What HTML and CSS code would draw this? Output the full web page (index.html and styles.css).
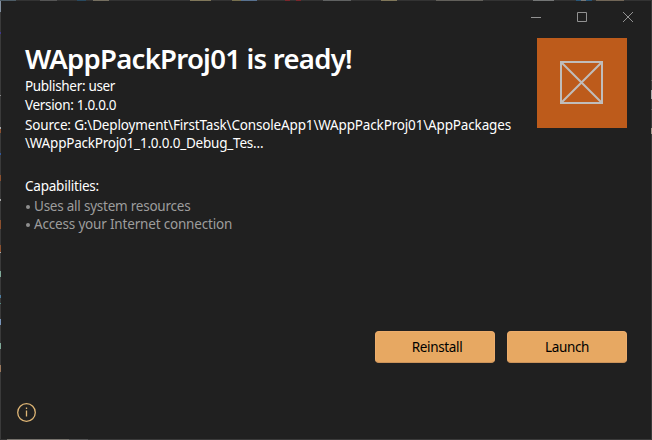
FILE: index.html
```
<!DOCTYPE html>
<html lang="en">
<head>
<meta charset="utf-8">
<title>App Installer</title>
<link rel="stylesheet" href="styles.css">
</head>
<body>
<div class="desktop">
  <div class="edge-top"></div>
  <div class="edge-left"></div>
  <main class="window">
    <header class="titlebar">
      <svg width="12" height="12" viewBox="0 0 12 12"><path d="M1 6.5h10"/></svg>
      <svg width="12" height="12" viewBox="0 0 12 12"><path d="M1.5 1.5h9v9h-9z"/></svg>
      <svg width="12" height="12" viewBox="0 0 12 12"><path d="M1 1l10 10M11 1L1 11"/></svg>
    </header>
    <section class="summary">
      <div class="details">
        <h1><span>WAppPackProj01 is ready!</span></h1>
        <p class="publisher"><span>Publisher: user</span></p>
        <p class="version"><span>Version: 1.0.0.0</span></p>
        <p class="source"><span>Source: G:\Deployment\FirstTask\ConsoleApp1\WAppPackProj01\AppPackages</span></p>
        <p class="source-rest"><span>\WAppPackProj01_1.0.0.0_Debug_Tes...</span></p>
        <h2><span>Capabilities:</span></h2>
        <ul>
          <li class="cap-system"><i></i><span>Uses all system resources</span></li>
          <li class="cap-internet"><i></i><span>Access your Internet connection</span></li>
        </ul>
      </div>
      <div class="logo">
        <svg width="43" height="43" viewBox="0 0 43 43"><path d="M1 1h41v41h-41zM1 1l41 41M42 1l-41 41"/></svg>
      </div>
    </section>
    <div class="actions">
      <button class="reinstall" type="button"><span>Reinstall</span></button>
      <button class="launch" type="button"><span>Launch</span></button>
    </div>
    <footer>
      <svg width="20" height="20" viewBox="0 0 20 20"><circle cx="10.5" cy="10.5" r="8.8"/><path d="M10.5 8.6v5.8M10.5 5.6v1.3"/></svg>
    </footer>
  </main>
  <div class="edge-right"></div>
  <div class="edge-bottom"></div>
</div>
</body>
</html>
```
FILE: styles.css
```
* { box-sizing: border-box; margin: 0; padding: 0; }
body { background: #333; font-family: "Noto Sans", "Open Sans", sans-serif; font-size: 13.5px; color: #fff; overflow: hidden; }
.desktop {
  display: grid;
  width: 652px;
  height: 440px;
  grid-template: 1px 438px 1px / 1px 650px 1px;
}
.edge-top {
  grid-column: 1 / -1;
  background: linear-gradient(90deg, #4d5c66 0 16px, #333 16px 40px, #555 40px 57px, #333 57px 77px, #28495f 77px 86px, #333 86px 93px, #756f60 93px 109px, #333 109px 190px, #80775a 190px 211px, #333 211px 232px, #77704f 232px 241px, #58718f 241px 257px, #333 257px 285px, #7b262b 285px 290px, #333 290px 296px, #7b262b 296px 301px, #333 301px 323px, #606262 323px 351px, #333 351px 381px, #80775a 381px 397px, #333 397px 436px, #62605b 436px 483px, #333 483px 533px, #747676 533px 554px, #333 554px 576px, #285779 576px 581px, #777 581px 586px, #285779 586px 592px, #333 592px 596px, #716657 596px 624px, #333 624px);
}
.edge-left {
  background: linear-gradient(#8390a0 0 11px, #3a3a3a 11px 31px, #40358f 31px 33px, #3a3a3a 33px 94px, #888 94px 95px, #3a3a3a 95px 126px, #aaa 126px 128px, #8b502f 128px 132px, #3a3a3a 132px 152px, #31579b 152px 154px, #3a3a3a 154px 174px, #8b502f 174px 180px, #3a3a3a 180px 198px, #aaa 198px 200px, #3a3a3a 200px 219px, #8b502f 219px 228px, #3a3a3a 228px 244px, #8b502f 244px 251px, #aaa 251px 252px, #3a3a3a 252px 270px, #80aa99 270px 276px, #3a3a3a 276px 294px, #4d7da0 294px 297px, #3a3a3a 297px 302px, #548c87 302px 303px, #3a3a3a 303px 318px, #7995bb 318px 324px, #3a3a3a 324px 342px, #80aa99 342px 348px, #3a3a3a 348px 364px, #9b785c 364px 371px, #3a3a3a 371px);
}
.edge-right {
  background: linear-gradient(#3a3a3a 0 79px, #666 79px 80px, #3a3a3a 80px 89px, #aaa 89px 98px, #3a3a3a 98px 108px, #666 108px 109px, #3a3a3a 109px 127px, #a69a8e 127px 133px, #3a3a3a 133px);
}
.edge-bottom {
  grid-column: 1 / -1;
  background: linear-gradient(90deg, #333 0 7px, #77736d 7px 69px, #555 69px 88px, #3a3a3a 88px);
}
.window { display: flex; flex-direction: column; background: #202020; }
.titlebar { display: flex; justify-content: flex-end; gap: 34px; height: 37px; padding: 10px 17px 0 0; }
svg { display: block; fill: none; }
.titlebar svg { stroke: #929292; stroke-width: 1; }
.summary { display: flex; justify-content: space-between; height: 293px; padding: 0 24px; }
.details { white-space: nowrap; }
h1 { height: 39px; font-size: 27.5px; line-height: 41px; font-weight: 600; letter-spacing: -0.74px; }
p, h2, li { height: 18px; line-height: 18px; font-weight: 400; letter-spacing: -0.23px; }
.publisher, .version { letter-spacing: -0.32px; }
.version { margin-top: 1px; }
.source { margin-top: 2px; letter-spacing: -0.16px; }
.source-rest { letter-spacing: -0.21px; }
h2 { margin-top: 25px; font-size: 13.5px; letter-spacing: -0.22px; }
ul { list-style: none; padding-top: 2px; }
li { display: flex; align-items: center; color: #9d9d9d; }
.cap-internet { letter-spacing: -0.18px; }
li i { width: 4px; height: 4px; margin: 2px 4px 0 1px; border-radius: 50%; background: #8f8f8f; }
.logo { width: 90px; height: 90px; padding: 23px; background: #bd5b1b; }
.logo svg { stroke: #c0bdbb; stroke-width: 2; }
.actions { display: flex; justify-content: flex-end; gap: 12px; padding-right: 24px; }
button { width: 120px; height: 32px; border: 1px solid #edad6c; border-bottom-color: #cc935a; border-radius: 4px; background: #e7a862; color: #000; font: inherit; line-height: 30px; letter-spacing: -0.35px; }
.reinstall { padding-left: 4px; }
footer { margin-top: auto; padding: 0 0 17px 15px; }
footer svg { stroke: #deb575; stroke-width: 1.3; }
```
